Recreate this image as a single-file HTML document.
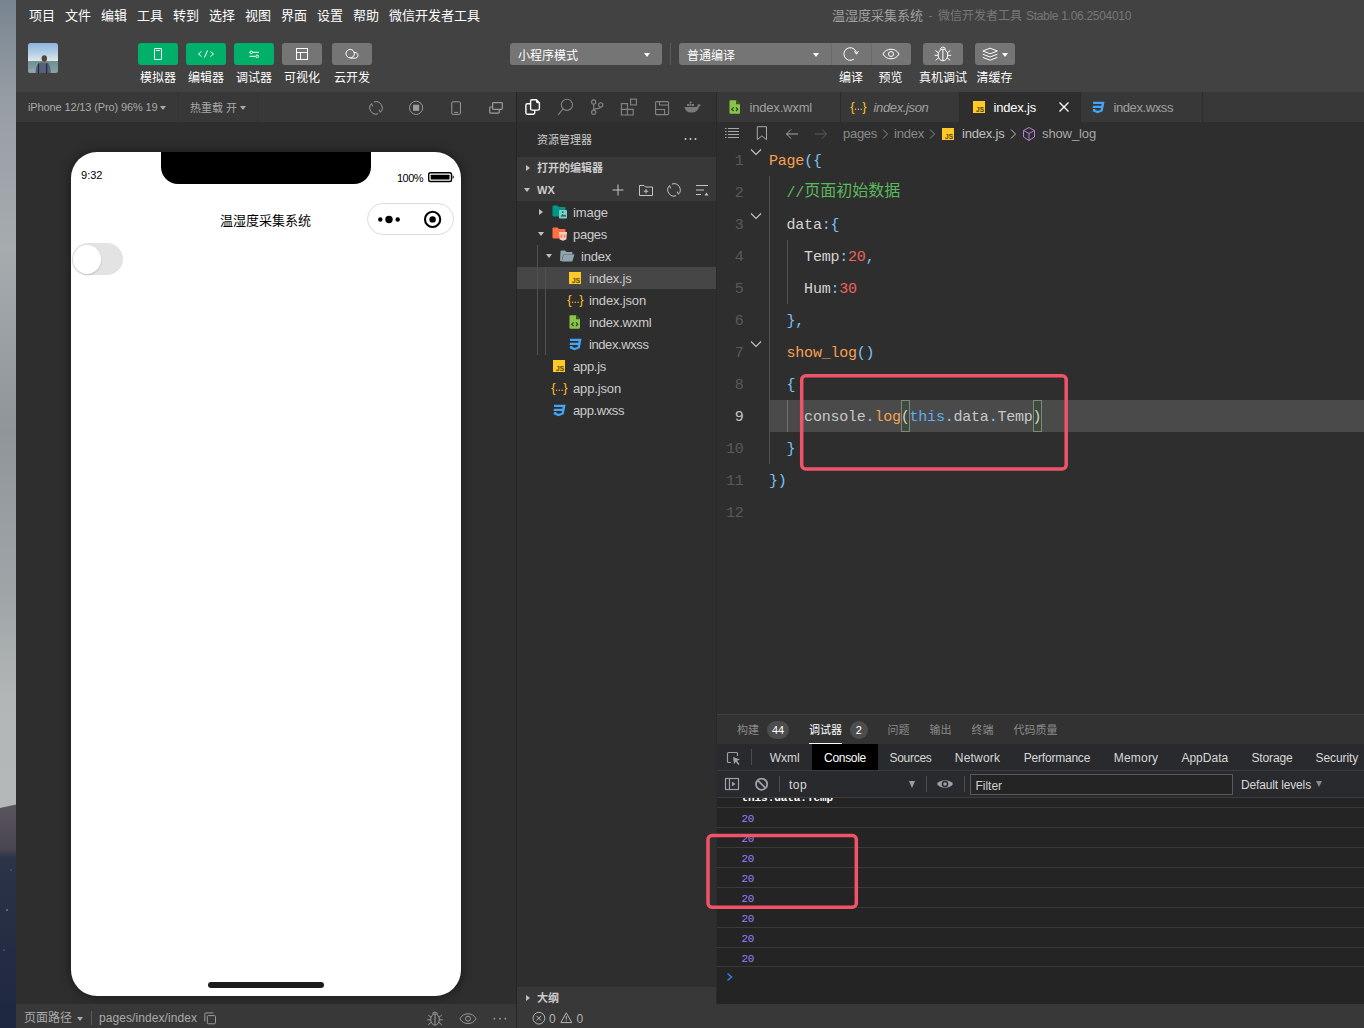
<!DOCTYPE html>
<html lang="zh-CN"><head><meta charset="utf-8"><title>微信开发者工具</title>
<style>
html,body{margin:0;padding:0;}
body{width:1364px;height:1028px;position:relative;overflow:hidden;background:#2e2e2e;font-family:'Liberation Sans','Noto Sans CJK SC',sans-serif;}
.r{position:absolute;display:block;}
.t{position:absolute;white-space:pre;}
</style></head><body>
<div class="r" style="left:0;top:0;width:16px;height:1028px;background:linear-gradient(180deg,#78848f 0px,#969ea5 100px,#a6abae 250px,#8f9599 430px,#a0a6a8 600px,#b2b6b6 700px,#b4b8b8 810px);"></div>
<svg class="r" style="left:0px;top:780px;" width="16" height="248" viewBox="0 0 16 248"><defs><linearGradient id="mt" x1="0" y1="0" x2="0" y2="1"><stop offset="0" stop-color="#5a555e"/><stop offset="0.20" stop-color="#4a4651"/><stop offset="0.24" stop-color="#2b3348"/><stop offset="1" stop-color="#1d2740"/></linearGradient></defs><polygon points="0,28 16,24.500 16,248 0,248" fill="url(#mt)"/><circle cx="7" cy="130" r="0.800" fill="#9fb0c8"/><circle cx="11" cy="90" r="0.600" fill="#8fa0b8"/><circle cx="4" cy="170" r="0.600" fill="#8fa0b8"/></svg>
<div class="r" style="left:16px;top:0px;width:1348px;height:92px;background:#424242;"></div>
<span class="t" id="t0" style="left:29px;top:5.50px;line-height:20px;font-size:13px;color:#ffffff;">项目</span>
<span class="t" id="t1" style="left:65px;top:5.50px;line-height:20px;font-size:13px;color:#ffffff;">文件</span>
<span class="t" id="t2" style="left:101px;top:5.50px;line-height:20px;font-size:13px;color:#ffffff;">编辑</span>
<span class="t" id="t3" style="left:137px;top:5.50px;line-height:20px;font-size:13px;color:#ffffff;">工具</span>
<span class="t" id="t4" style="left:173px;top:5.50px;line-height:20px;font-size:13px;color:#ffffff;">转到</span>
<span class="t" id="t5" style="left:209px;top:5.50px;line-height:20px;font-size:13px;color:#ffffff;">选择</span>
<span class="t" id="t6" style="left:245px;top:5.50px;line-height:20px;font-size:13px;color:#ffffff;">视图</span>
<span class="t" id="t7" style="left:281px;top:5.50px;line-height:20px;font-size:13px;color:#ffffff;">界面</span>
<span class="t" id="t8" style="left:317px;top:5.50px;line-height:20px;font-size:13px;color:#ffffff;">设置</span>
<span class="t" id="t9" style="left:353px;top:5.50px;line-height:20px;font-size:13px;color:#ffffff;">帮助</span>
<span class="t" id="t10" style="left:389px;top:5.50px;line-height:20px;font-size:13px;color:#ffffff;">微信开发者工具</span>
<span class="t" id="t11" style="left:832px;top:5.50px;line-height:20px;font-size:13px;color:#a0a0a0;">温湿度采集系统</span>
<span class="t" id="t12" style="left:928.5px;top:5.50px;line-height:20px;font-size:12px;color:#787878;">-</span>
<span class="t" id="t13" style="left:938px;top:5.50px;line-height:20px;font-size:12px;color:#787878;">微信开发者工具</span>
<span class="t" id="t14" style="left:1026px;top:5.50px;line-height:20px;font-size:12px;color:#787878;letter-spacing:-0.303px;">Stable 1.06.2504010</span>
<svg class="r" style="left:28px;top:43px;" width="30" height="30" viewBox="0 0 30 30"><defs><linearGradient id="sky" x1="0" y1="0" x2="0" y2="1"><stop offset="0" stop-color="#8fb4dc"/><stop offset="0.35" stop-color="#b4d0e6"/><stop offset="0.6" stop-color="#e4e8e2"/><stop offset="0.61" stop-color="#6f9295"/><stop offset="1" stop-color="#86a3a3"/></linearGradient><clipPath id="avc"><rect width="30" height="30" rx="2.5"/></clipPath></defs>
<g clip-path="url(#avc)"><rect width="30" height="30" fill="url(#sky)"/><path d="M0 30 L0 27 L6 25 L10 30Z" fill="#8fa2ad"/><path d="M7.500 30 C7.800 23 10 19.800 13 19.600 L19 19.600 C21.500 20 22.500 24 22.800 30Z" fill="#56607a"/><ellipse cx="16.300" cy="15.600" rx="2.700" ry="3.300" fill="#4d4844"/><path d="M14 17 q2 3.500 4.500 0.500 l0 2.200 h-4.500z" fill="#8a7a6c"/><path d="M10.500 20.500v9.500M18.700 20.500v9.500" stroke="#1f2540" stroke-width="1.100"/></g></svg>
<div class="r" style="left:138px;top:43px;width:40px;height:22px;background:#00b06a;border-radius:3px;"></div>
<span class="t" id="t15" style="left:8px;width:300px;text-align:center;top:69.50px;line-height:16px;font-size:12px;color:#ffffff;">模拟器</span>
<div class="r" style="left:186px;top:43px;width:40px;height:22px;background:#00b06a;border-radius:3px;"></div>
<span class="t" id="t16" style="left:56px;width:300px;text-align:center;top:69.50px;line-height:16px;font-size:12px;color:#ffffff;">编辑器</span>
<div class="r" style="left:234px;top:43px;width:40px;height:22px;background:#00b06a;border-radius:3px;"></div>
<span class="t" id="t17" style="left:104px;width:300px;text-align:center;top:69.50px;line-height:16px;font-size:12px;color:#ffffff;">调试器</span>
<div class="r" style="left:282px;top:43px;width:40px;height:22px;background:#757575;border-radius:3px;"></div>
<span class="t" id="t18" style="left:152px;width:300px;text-align:center;top:69.50px;line-height:16px;font-size:12px;color:#ffffff;">可视化</span>
<div class="r" style="left:332px;top:43px;width:40px;height:22px;background:#757575;border-radius:3px;"></div>
<span class="t" id="t19" style="left:202px;width:300px;text-align:center;top:69.50px;line-height:16px;font-size:12px;color:#ffffff;">云开发</span>
<svg class="r" style="left:138px;top:43px;" width="40" height="22" viewBox="0 0 40 22"><rect x="16.5" y="5.5" width="7" height="11" rx="0.5" stroke="#fff" fill="none" stroke-width="1"/><path d="M18 7.5h4" stroke="#fff" fill="none" stroke-width="1"/></svg>
<svg class="r" style="left:186px;top:43px;" width="40" height="22" viewBox="0 0 40 22"><path d="M15.5 8.5 L12.5 11 L15.5 13.5 M24.5 8.5 L27.5 11 L24.5 13.5 M21.5 7.5 L18.5 14.5" stroke="#fff" fill="none" stroke-width="1"/></svg>
<svg class="r" style="left:234px;top:43px;" width="40" height="22" viewBox="0 0 40 22"><path d="M15.500 9.300h0.500M18.500 9.300H25M15.500 13.300h6M24.500 13.300h0.500" stroke="#fff" fill="none" stroke-width="1"/><circle cx="17.200" cy="9.300" r="1.300" stroke="#fff" fill="none" stroke-width="1"/><circle cx="23.200" cy="13.300" r="1.300" stroke="#fff" fill="none" stroke-width="1"/></svg>
<svg class="r" style="left:282px;top:43px;" width="40" height="22" viewBox="0 0 40 22"><rect x="14.5" y="5.5" width="11" height="11" stroke="#fff" fill="none" stroke-width="1"/><path d="M14.5 9.5h11M18.5 9.5v7" stroke="#fff" fill="none" stroke-width="1"/></svg>
<svg class="r" style="left:332px;top:43px;" width="40" height="22" viewBox="0 0 40 22"><circle cx="18.200" cy="10.600" r="4.200" stroke="#fff" fill="none" stroke-width="1"/><path d="M21.800 9.900 a2.800 2.800 0 1 1 1.800 5.200 H18.200" stroke="#fff" fill="none" stroke-width="1"/></svg>
<div class="r" style="left:510px;top:43px;width:152px;height:22px;background:#757575;border-radius:3px;"></div>
<span class="t" id="t20" style="left:518px;top:47.50px;line-height:16px;font-size:12px;color:#ffffff;">小程序模式</span>
<div class="r" style="left:644px;top:53px;border:3px solid transparent;border-top:4px solid #fff;border-bottom:0;"></div>
<div class="r" style="left:670px;top:43px;width:1px;height:22px;background:#5a5a5a;"></div>
<div class="r" style="left:679px;top:43px;width:232px;height:22px;background:#757575;border-radius:3px;"></div>
<span class="t" id="t21" style="left:687px;top:47.50px;line-height:16px;font-size:12px;color:#ffffff;">普通编译</span>
<div class="r" style="left:813px;top:53px;border:3px solid transparent;border-top:4px solid #fff;border-bottom:0;"></div>
<div class="r" style="left:831px;top:43px;width:1px;height:22px;background:#696969;"></div>
<div class="r" style="left:871px;top:43px;width:1px;height:22px;background:#696969;"></div>
<div class="r" style="left:923px;top:43px;width:40px;height:22px;background:#757575;border-radius:3px;"></div>
<div class="r" style="left:975px;top:43px;width:40px;height:22px;background:#757575;border-radius:3px;"></div>
<svg class="r" style="left:831px;top:43px;" width="40" height="22" viewBox="0 0 40 22"><path d="M22.900 16.100 A6.300 6.300 0 1 1 25.500 10.900" stroke="#fff" fill="none" stroke-width="1"/><path d="M23.300 8.300 L25.600 11.200 L27.300 8.200" stroke="#fff" fill="none" stroke-width="1"/></svg>
<svg class="r" style="left:871px;top:43px;" width="40" height="22" viewBox="0 0 40 22"><path d="M12 11 C15 4.600 25 4.600 28 11 C25 17.400 15 17.400 12 11Z" stroke="#fff" fill="none" stroke-width="1"/><circle cx="20" cy="11" r="2.500" stroke="#fff" fill="none" stroke-width="1"/></svg>
<svg class="r" style="left:923px;top:43px;" width="40" height="22" viewBox="0 0 40 22"><ellipse cx="19.900" cy="12" rx="4.800" ry="5.800" stroke="#fff" fill="none" stroke-width="1"/><path d="M19.900 6.200v11.600 M17.400 6.600 a2.500 2.500 0 0 1 5 0 M15.400 9.800 l-3 -2.300 M24.400 9.800 l3 -2.300 M15.100 12.300 h-3.500 M24.700 12.300 h3.500 M15.600 14.800 l-3 2.500 M24.200 14.800 l3 2.500" stroke="#fff" fill="none" stroke-width="1"/></svg>
<svg class="r" style="left:975px;top:43px;" width="40" height="22" viewBox="0 0 40 22"><path d="M7.800 8 L15.100 5.200 L22.400 8 L15.100 10.800Z M7.800 11.200 L15.100 14 L22.400 11.200 M7.800 14.400 L15.100 17.200 L22.400 14.400" stroke="#fff" fill="none" stroke-width="1"/></svg>
<div class="r" style="left:1002px;top:53px;border:3px solid transparent;border-top:4px solid #fff;border-bottom:0;"></div>
<span class="t" id="t22" style="left:701px;width:300px;text-align:center;top:69.50px;line-height:16px;font-size:12px;color:#ffffff;">编译</span>
<span class="t" id="t23" style="left:740.5px;width:300px;text-align:center;top:69.50px;line-height:16px;font-size:12px;color:#ffffff;">预览</span>
<span class="t" id="t24" style="left:793px;width:300px;text-align:center;top:69.50px;line-height:16px;font-size:12px;color:#ffffff;">真机调试</span>
<span class="t" id="t25" style="left:844.5px;width:300px;text-align:center;top:69.50px;line-height:16px;font-size:12px;color:#ffffff;">清缓存</span>
<div class="r" style="left:16px;top:92px;width:500px;height:30px;background:#383838;"></div>
<span class="t" id="t26" style="left:28px;top:99.00px;line-height:16px;font-size:11px;color:#aaaaaa;letter-spacing:-0.128px;">iPhone 12/13 (Pro) 96% 19</span>
<div class="r" style="left:160px;top:106px;border:3px solid transparent;border-top:4px solid #aaa;border-bottom:0;"></div>
<div class="r" style="left:178px;top:92px;width:1px;height:30px;background:#333333;"></div>
<span class="t" id="t27" style="left:190px;top:99.50px;line-height:16px;font-size:11px;color:#aaaaaa;letter-spacing:-0.013px;">热重载 开</span>
<div class="r" style="left:240px;top:106px;border:3px solid transparent;border-top:4px solid #aaa;border-bottom:0;"></div>
<div class="r" style="left:257px;top:92px;width:1px;height:30px;background:#333333;"></div>
<svg class="r" style="left:368px;top:99px;" width="16" height="17" viewBox="0 0 16 17"><path d="M5.900 3.100 A6.200 6.200 0 0 1 12.400 13.300 L11.200 10.600 M10.100 14.700 A6.200 6.200 0 0 1 3.600 4.500 L4.700 7.500" stroke="#9a9a9a" fill="none" stroke-width="1"/></svg>
<svg class="r" style="left:408px;top:99px;" width="17" height="17" viewBox="0 0 17 17"><circle cx="8.100" cy="8.800" r="6.600" stroke="#9a9a9a" fill="none" stroke-width="1"/><rect x="5" y="5.700" width="6.200" height="6.200" fill="#9a9a9a"/></svg>
<svg class="r" style="left:448px;top:99px;" width="16" height="17" viewBox="0 0 16 17"><rect x="3.800" y="2.800" width="8.600" height="12.600" rx="1.200" stroke="#9a9a9a" fill="none" stroke-width="1"/><path d="M6.200 13.400h3.800" stroke="#9a9a9a" fill="none" stroke-width="1"/></svg>
<svg class="r" style="left:488px;top:99px;" width="18" height="17" viewBox="0 0 18 17"><rect x="4.600" y="3.600" width="9.700" height="6.700" rx="0.800" stroke="#9a9a9a" fill="none" stroke-width="1.200"/><path d="M4.600 8 H2.500 a0.800 0.800 0 0 0 -0.800 0.800 v4.500 a0.800 0.800 0 0 0 0.800 0.800 h8 a0.800 0.800 0 0 0 0.800 -0.800 V10.300" stroke="#9a9a9a" fill="none" stroke-width="1.200"/></svg>
<div class="r" style="left:16px;top:122px;width:500px;height:882px;background:#2e2e2e;"></div>
<div class="r" style="left:71px;top:152px;width:390px;height:844px;background:#fff;border-radius:26px;box-shadow:0 0 10px 2px rgba(0,0,0,0.35);overflow:hidden;"></div>
<div class="r" style="left:161px;top:152px;width:210px;height:32px;background:#000;border-radius:0 0 17px 17px;"></div>
<span class="t" id="t28" style="left:81px;top:168.00px;line-height:14px;font-size:11px;color:#000000;letter-spacing:0.020px;">9:32</span>
<span class="t" id="t29" style="left:397px;top:171.00px;line-height:14px;font-size:11px;color:#000000;letter-spacing:-0.535px;">100%</span>
<svg class="r" style="left:427px;top:171px;" width="28" height="12" viewBox="0 0 28 12"><rect x="1.700" y="1.700" width="22.800" height="8.800" rx="1.800" fill="none" stroke="#000" stroke-width="1.400"/><rect x="3.700" y="3.700" width="18.800" height="4.800" rx="0.600" fill="#000"/><path d="M25.700 4.300 a2 2 0 0 1 0 3.600z" fill="#000"/></svg>
<span class="t" id="t30" style="left:220px;top:212.00px;line-height:18px;font-size:13px;color:#000000;">温湿度采集系统</span>
<div class="r" style="left:367px;top:203px;width:85px;height:30px;border:1px solid #dcdcdc;border-radius:16px;background:#fff;"></div>
<svg class="r" style="left:367px;top:203px;" width="87" height="32" viewBox="0 0 87 32"><circle cx="13.3" cy="16.5" r="2.2" fill="#000"/><circle cx="22" cy="16.5" r="3.7" fill="#000"/><circle cx="30.7" cy="16.5" r="2.2" fill="#000"/><circle cx="65.6" cy="16.4" r="7.6" fill="none" stroke="#000" stroke-width="2.1"/><circle cx="65.6" cy="16.4" r="3.2" fill="#000"/></svg>
<div class="r" style="left:72px;top:243px;width:51px;height:32px;border-radius:16px;background:#e3e3e3;"></div>
<div class="r" style="left:72.800px;top:244.500px;width:28.600px;height:29px;border-radius:50%;background:#fff;box-shadow:0 1px 2px rgba(0,0,0,0.18);"></div>
<div class="r" style="left:208px;top:982px;width:116px;height:5.6px;background:#1c1c1c;border-radius:3px;"></div>
<div class="r" style="left:16px;top:1004px;width:1348px;height:24px;background:#383838;"></div>
<span class="t" id="t31" style="left:24px;top:1010.00px;line-height:16px;font-size:12px;color:#aaaaaa;">页面路径</span>
<div class="r" style="left:77px;top:1017px;border:3px solid transparent;border-top:4px solid #aaa;border-bottom:0;"></div>
<div class="r" style="left:91px;top:1011px;width:1px;height:14px;background:#5a5a5a;"></div>
<span class="t" id="t32" style="left:99px;top:1010.00px;line-height:16px;font-size:12px;color:#aaaaaa;letter-spacing:0.074px;">pages/index/index</span>
<svg class="r" style="left:203px;top:1011px;" width="16" height="16" viewBox="0 0 16 16"><rect x="4.300" y="4.600" width="8.200" height="8.200" rx="1" stroke="#9a9a9a" fill="none" stroke-width="1"/><path d="M1.800 10.400 V2.900 a1 1 0 0 1 1 -1 H10.300" stroke="#9a9a9a" fill="none" stroke-width="1"/></svg>
<svg class="r" style="left:425px;top:1009px;" width="20" height="19" viewBox="0 0 20 19"><ellipse cx="10" cy="10.500" rx="4.300" ry="5.600" stroke="#9a9a9a" fill="none" stroke-width="1"/><path d="M10 5v11 M7.700 5.300 a2.300 2.300 0 0 1 4.600 0 M6 8.300 l-2.800 -2.200 M14 8.300 l2.800 -2.200 M5.700 10.800 h-3.500 M14.300 10.800 h3.500 M6.200 13.300 l-3 2.500 M13.800 13.300 l3 2.500" stroke="#9a9a9a" fill="none" stroke-width="1"/></svg>
<svg class="r" style="left:458px;top:1010px;" width="20" height="18" viewBox="0 0 20 18"><path d="M2 8.700 C5 2.200 15 2.200 18 8.700 C15 15.200 5 15.200 2 8.700Z" stroke="#9a9a9a" fill="none" stroke-width="1"/><circle cx="10" cy="8.700" r="2.500" stroke="#9a9a9a" fill="none" stroke-width="1"/></svg>
<svg class="r" style="left:492px;top:1014px;" width="16" height="10" viewBox="0 0 16 10"><circle cx="2.400" cy="4.700" r="0.900" fill="#a0a0a0"/><circle cx="8" cy="4.700" r="0.900" fill="#a0a0a0"/><circle cx="13.400" cy="4.700" r="0.900" fill="#a0a0a0"/></svg>
<div class="r" style="left:516px;top:92px;width:1px;height:936px;background:#252525;"></div>
<div class="r" style="left:517px;top:92px;width:199px;height:30px;background:#333333;"></div>
<svg class="r" style="left:523px;top:97px;" width="20" height="20" viewBox="0 0 20 20"><path d="M9 2.700 h4.400 l3 3 v6 a1.400 1.400 0 0 1 -1.400 1.400 h-6 a1.400 1.400 0 0 1 -1.400 -1.400 v-7.600 a1.400 1.400 0 0 1 1.400 -1.400z M13.600 3 v1.500 a1 1 0 0 0 1 1 h1.500" stroke="#fff" fill="none" stroke-width="1.400"/><path d="M7.600 6.800 h-3.300 a1.400 1.400 0 0 0 -1.400 1.400 v7.600 a1.400 1.400 0 0 0 1.400 1.400 h6 a1.400 1.400 0 0 0 1.400 -1.400 v-2.700" stroke="#fff" fill="none" stroke-width="1.400"/></svg>
<svg class="r" style="left:556px;top:97px;" width="20" height="20" viewBox="0 0 20 20"><circle cx="10.900" cy="7.800" r="5.600" stroke="#858585" fill="none" stroke-width="1.1"/><path d="M7 12 L2.200 17.800" stroke="#858585" fill="none" stroke-width="1.1"/></svg>
<svg class="r" style="left:588px;top:97px;" width="20" height="20" viewBox="0 0 20 20"><circle cx="5.700" cy="5" r="2.100" stroke="#858585" fill="none" stroke-width="1.1"/><circle cx="5.700" cy="15.200" r="2.100" stroke="#858585" fill="none" stroke-width="1.1"/><circle cx="12.700" cy="7.900" r="2.100" stroke="#858585" fill="none" stroke-width="1.1"/><path d="M5.700 7.100 v6 M12.700 10 c0 2.500 -7 0.800 -7 3.100" stroke="#858585" fill="none" stroke-width="1.1"/></svg>
<svg class="r" style="left:619px;top:97px;" width="20" height="20" viewBox="0 0 20 20"><path d="M2.400 6.600 h6 v5.800 h-6z M8.400 12.400 v5.600 h-6 v-5.600 M8.400 12.400 h5.800 v5.600 h-5.800" stroke="#858585" fill="none" stroke-width="1.1"/><rect x="11.600" y="2.100" width="5.800" height="5.800" stroke="#858585" fill="none" stroke-width="1.1"/></svg>
<svg class="r" style="left:653px;top:99px;" width="18" height="18" viewBox="0 0 18 18"><rect x="2.600" y="2.600" width="13" height="13" rx="1.200" stroke="#858585" fill="none" stroke-width="1.1"/><path d="M6.500 2.600 v3.400 h9.100 M2.600 10.500 h9 v5" stroke="#858585" fill="none" stroke-width="1.1"/></svg>
<svg class="r" style="left:683px;top:99px;" width="20" height="16" viewBox="0 0 20 16"><path d="M1.5 8 h12 c0.800 -0.300 1.300 -1.200 1.200 -2.200 c1 -0.800 2.500 -0.500 3.300 0.200 c-0.700 0.300 -1.500 1 -2 2 c-0.800 3.500 -3.500 5.500 -7.500 5.500 c-4 0 -6.500 -2 -7 -5.500z" fill="#7a7a7a"/><path d="M4 5h2v2H4zM6.500 5h2v2h-2zM9 5h2v2H9zM6.500 2.600h2v2h-2z" fill="#7a7a7a"/></svg>
<div class="r" style="left:517px;top:122px;width:199px;height:882px;background:#2e2e2e;"></div>
<span class="t" id="t33" style="left:537px;top:132.40px;line-height:16px;font-size:11px;color:#cccccc;">资源管理器</span>
<svg class="r" style="left:683px;top:135px;" width="16" height="8" viewBox="0 0 16 8"><circle cx="2.500" cy="4" r="1" fill="#ccc"/><circle cx="7.500" cy="4" r="1" fill="#ccc"/><circle cx="12.500" cy="4" r="1" fill="#ccc"/></svg>
<div class="r" style="left:517px;top:157px;width:199px;height:44px;background:#383838;"></div>
<div class="r" style="left:526px;top:164.500px;border:3.500px solid transparent;border-left:4.500px solid #c0c0c0;border-right:0;"></div>
<span class="t" id="t34" style="left:537px;top:160.00px;line-height:16px;font-size:11px;color:#cccccc;font-weight:bold;">打开的编辑器</span>
<div class="r" style="left:524px;top:188px;border:3.500px solid transparent;border-top:4.500px solid #c0c0c0;border-bottom:0;"></div>
<span class="t" id="t35" style="left:537px;top:182.00px;line-height:16px;font-size:11px;color:#cccccc;font-weight:bold;letter-spacing:0.133px;">WX</span>
<svg class="r" style="left:610px;top:182px;" width="16" height="16" viewBox="0 0 16 16"><path d="M8 2.500v11M2.500 8h11" stroke="#c5c5c5" fill="none" stroke-width="1"/></svg>
<svg class="r" style="left:638px;top:182px;" width="16" height="16" viewBox="0 0 16 16"><path d="M1.500 3.500 h4.500 l1.500 1.500 h7 v8.500 h-13z M8 7v4.500 M5.800 9.200h4.500" stroke="#c5c5c5" fill="none" stroke-width="1"/></svg>
<svg class="r" style="left:666px;top:181px;" width="16" height="17" viewBox="0 0 16 17"><path d="M5.900 3.100 A6.200 6.200 0 0 1 12.400 13.300 L11.200 10.600 M10.100 14.700 A6.200 6.200 0 0 1 3.600 4.500 L4.700 7.500" stroke="#c5c5c5" fill="none" stroke-width="1"/></svg>
<svg class="r" style="left:694px;top:182px;" width="16" height="16" viewBox="0 0 16 16"><path d="M2 3.500h12M2 8h8M2 12.500h5" stroke="#c5c5c5" fill="none" stroke-width="1"/><path d="M10.500 13.500 l2 -3 l2 3z" fill="#c5c5c5"/></svg>
<div class="r" style="left:517px;top:267px;width:199px;height:22px;background:#464646;"></div>
<div class="r" style="left:537px;top:245px;width:1px;height:110px;background:#505050;"></div>
<div class="r" style="left:545px;top:267px;width:1px;height:88px;background:#505050;"></div>
<div class="r" style="left:538.5px;top:208.5px;border:3.500px solid transparent;border-left:4.500px solid #c0c0c0;border-right:0;"></div>
<svg class="r" style="left:551.7px;top:205px;" width="16" height="14" viewBox="0 0 16 14"><path d="M0.500 1.500 a1 1 0 0 1 1 -1 h4 l1.500 1.500 h5.500 a1 1 0 0 1 1 1 v7.500 a1 1 0 0 1 -1 1 h-11 a1 1 0 0 1 -1 -1z" fill="#009688"/><rect x="7" y="5" width="8" height="8.500" rx="1" fill="#80cbc4"/><path d="M8.500 11.500 l2 -2.500 l1.500 1.500 l1 -1 l1.500 2z M10 7 a0.800 0.800 0 1 1 0 0.100" fill="#00695c"/></svg>
<span class="t" id="t36" style="left:573px;top:203.50px;line-height:18px;font-size:13px;color:#cccccc;letter-spacing:-0.084px;">image</span>
<div class="r" style="left:537.5px;top:232px;border:3.500px solid transparent;border-top:4.500px solid #c0c0c0;border-bottom:0;"></div>
<svg class="r" style="left:551.7px;top:227px;" width="16" height="14" viewBox="0 0 16 14"><path d="M0.500 1.500 a1 1 0 0 1 1 -1 h4 l1.500 1.500 h5.500 a1 1 0 0 1 1 1 v7.500 a1 1 0 0 1 -1 1 h-11 a1 1 0 0 1 -1 -1z" fill="#ff7043"/><path d="M7 5 h8 l-0.700 7.500 l-3.300 1.200 l-3.300 -1.200z" fill="#ffccbc"/><path d="M10 7.500 L8.800 9 L10 10.500 M12 7.500 L13.200 9 L12 10.500" stroke="#e64a19" stroke-width="0.900" fill="none"/></svg>
<span class="t" id="t37" style="left:573px;top:225.50px;line-height:18px;font-size:13px;color:#cccccc;letter-spacing:-0.284px;">pages</span>
<div class="r" style="left:546px;top:254px;border:3.500px solid transparent;border-top:4.500px solid #c0c0c0;border-bottom:0;"></div>
<svg class="r" style="left:560px;top:250px;" width="15" height="12" viewBox="0 0 15 12"><path d="M0.500 1.500 a1 1 0 0 1 1 -1 h3.500 l1.500 1.500 h5 a1 1 0 0 1 1 1 v1.500 h-9 l-2 6.500 h-1.500z" fill="#90a4ae"/><path d="M3.800 4.500 h10.700 l-2.200 7 h-10.800z" fill="#90a4ae"/></svg>
<span class="t" id="t38" style="left:581px;top:247.50px;line-height:18px;font-size:13px;color:#cccccc;letter-spacing:-0.216px;">index</span>
<svg class="r" style="left:569px;top:272px;" width="12" height="12" viewBox="0 0 12 12"><rect width="12" height="12" fill="#ffca28"/><text x="11" y="10.800" font-size="6.500" font-weight="bold" text-anchor="end" fill="#4a3c00" font-family="Liberation Sans,sans-serif">JS</text></svg>
<span class="t" id="t39" style="left:589px;top:269.50px;line-height:18px;font-size:13px;color:#cccccc;letter-spacing:-0.197px;">index.js</span>
<svg class="r" style="left:566.7px;top:293px;" width="17" height="14" viewBox="0 0 17 14"><text x="0.300" y="11" font-size="13" fill="#fbc02d" font-family="Liberation Sans,sans-serif">{</text><text x="12.300" y="11" font-size="13" fill="#fbc02d" font-family="Liberation Sans,sans-serif">}</text><circle cx="5.600" cy="9.200" r="0.700" fill="#fbc02d"/><circle cx="8.400" cy="9.200" r="0.700" fill="#fbc02d"/><circle cx="11.200" cy="9.200" r="0.700" fill="#fbc02d"/></svg>
<span class="t" id="t40" style="left:589px;top:291.50px;line-height:18px;font-size:13px;color:#cccccc;letter-spacing:-0.155px;">index.json</span>
<svg class="r" style="left:568.7px;top:315px;" width="12" height="14" viewBox="0 0 12 14"><path d="M1.500 0.300 h5.500 l4 4 v8.500 a1 1 0 0 1 -1 1 h-8.500 a1 1 0 0 1 -1 -1 v-11.500 a1 1 0 0 1 1 -1z" fill="#8bc34a"/><path d="M7 0.300 v4 h4z" fill="#2e5a14"/><path d="M4.600 7.300 L2.800 9.200 L4.600 11.100 M6.900 7.300 L8.700 9.200 L6.900 11.100" stroke="#24440c" stroke-width="1.200" fill="none"/></svg>
<span class="t" id="t41" style="left:589px;top:313.50px;line-height:18px;font-size:13px;color:#cccccc;letter-spacing:-0.180px;">index.wxml</span>
<svg class="r" style="left:568.2px;top:337.5px;" width="14" height="13" viewBox="0 0 14 13"><path transform="translate(-0.700,0) scale(1.140,1)" d="M2.200 0.800 h10.300 l-1.600 9.400 l-4.600 2 l-4.300 -2 l0.400 -2.300 h2.200 l-0.200 1 l2.200 0.900 l2.400 -0.900 l0.300 -2 h-7.300 l0.400 -2.200 h7.200 l0.300 -1.700 h-7.300z" fill="#42a5f5"/></svg>
<span class="t" id="t42" style="left:589px;top:335.50px;line-height:18px;font-size:13px;color:#cccccc;letter-spacing:-0.408px;">index.wxss</span>
<svg class="r" style="left:553px;top:360px;" width="12" height="12" viewBox="0 0 12 12"><rect width="12" height="12" fill="#ffca28"/><text x="11" y="10.800" font-size="6.500" font-weight="bold" text-anchor="end" fill="#4a3c00" font-family="Liberation Sans,sans-serif">JS</text></svg>
<span class="t" id="t43" style="left:573px;top:357.50px;line-height:18px;font-size:13px;color:#cccccc;letter-spacing:-0.284px;">app.js</span>
<svg class="r" style="left:550.7px;top:381px;" width="17" height="14" viewBox="0 0 17 14"><text x="0.300" y="11" font-size="13" fill="#fbc02d" font-family="Liberation Sans,sans-serif">{</text><text x="12.300" y="11" font-size="13" fill="#fbc02d" font-family="Liberation Sans,sans-serif">}</text><circle cx="5.600" cy="9.200" r="0.700" fill="#fbc02d"/><circle cx="8.400" cy="9.200" r="0.700" fill="#fbc02d"/><circle cx="11.200" cy="9.200" r="0.700" fill="#fbc02d"/></svg>
<span class="t" id="t44" style="left:573px;top:379.50px;line-height:18px;font-size:13px;color:#cccccc;letter-spacing:-0.145px;">app.json</span>
<svg class="r" style="left:552.2px;top:403.5px;" width="14" height="13" viewBox="0 0 14 13"><path transform="translate(-0.700,0) scale(1.140,1)" d="M2.200 0.800 h10.300 l-1.600 9.400 l-4.600 2 l-4.300 -2 l0.400 -2.300 h2.200 l-0.200 1 l2.200 0.900 l2.400 -0.900 l0.300 -2 h-7.300 l0.400 -2.200 h7.200 l0.300 -1.700 h-7.300z" fill="#42a5f5"/></svg>
<span class="t" id="t45" style="left:573px;top:401.50px;line-height:18px;font-size:13px;color:#cccccc;letter-spacing:-0.400px;">app.wxss</span>
<div class="r" style="left:517px;top:987px;width:199px;height:17px;background:#383838;"></div>
<div class="r" style="left:526px;top:994.500px;border:3.500px solid transparent;border-left:4.500px solid #c0c0c0;border-right:0;"></div>
<span class="t" id="t46" style="left:537px;top:990.30px;line-height:16px;font-size:11px;color:#cccccc;font-weight:bold;">大纲</span>
<svg class="r" style="left:531px;top:1010px;" width="16" height="16" viewBox="0 0 16 16"><circle cx="7.900" cy="8.200" r="5.900" stroke="#b4b4b4" fill="none" stroke-width="1"/><path d="M5.600 5.900l4.600 4.600M10.200 5.900l-4.600 4.600" stroke="#b4b4b4" fill="none" stroke-width="1"/></svg>
<span class="t" id="t47" style="left:549px;top:1010.50px;line-height:16px;font-size:12px;color:#b4b4b4;">0</span>
<svg class="r" style="left:559px;top:1010px;" width="16" height="16" viewBox="0 0 16 16"><path d="M7.300 2.800 L12.800 12.600 H1.800Z M7.300 6v3.600 M7.300 10.500v1" stroke="#b4b4b4" fill="none" stroke-width="1"/></svg>
<span class="t" id="t48" style="left:576.5px;top:1010.50px;line-height:16px;font-size:12px;color:#b4b4b4;">0</span>
<div class="r" style="left:716px;top:92px;width:1px;height:912px;background:#2a2a2a;"></div>
<div class="r" style="left:717px;top:92px;width:647px;height:30px;background:#383838;"></div>
<div class="r" style="left:717px;top:92px;width:124px;height:30px;background:#383838;"></div>
<div class="r" style="left:841px;top:92px;width:119px;height:30px;background:#383838;"></div>
<div class="r" style="left:960px;top:92px;width:121px;height:30px;background:#2e2e2e;"></div>
<div class="r" style="left:1081px;top:92px;width:122px;height:30px;background:#383838;"></div>
<div class="r" style="left:840px;top:92px;width:1px;height:30px;background:#2b2b2b;"></div>
<div class="r" style="left:959px;top:92px;width:1px;height:30px;background:#2b2b2b;"></div>
<div class="r" style="left:1080px;top:92px;width:1px;height:30px;background:#2b2b2b;"></div>
<div class="r" style="left:1202px;top:92px;width:1px;height:30px;background:#2b2b2b;"></div>
<svg class="r" style="left:729.2px;top:100px;" width="12" height="14" viewBox="0 0 12 14"><path d="M1.500 0.300 h5.500 l4 4 v8.500 a1 1 0 0 1 -1 1 h-8.500 a1 1 0 0 1 -1 -1 v-11.500 a1 1 0 0 1 1 -1z" fill="#8bc34a"/><path d="M7 0.300 v4 h4z" fill="#2e5a14"/><path d="M4.600 7.300 L2.800 9.200 L4.600 11.100 M6.900 7.300 L8.700 9.200 L6.900 11.100" stroke="#24440c" stroke-width="1.200" fill="none"/></svg>
<span class="t" id="t49" style="left:749.5px;top:98.70px;line-height:18px;font-size:13px;color:#a0a0a0;letter-spacing:-0.180px;">index.wxml</span>
<svg class="r" style="left:849.7px;top:100px;" width="17" height="14" viewBox="0 0 17 14"><text x="0.300" y="11" font-size="13" fill="#fbc02d" font-family="Liberation Sans,sans-serif">{</text><text x="12.300" y="11" font-size="13" fill="#fbc02d" font-family="Liberation Sans,sans-serif">}</text><circle cx="5.600" cy="9.200" r="0.700" fill="#fbc02d"/><circle cx="8.400" cy="9.200" r="0.700" fill="#fbc02d"/><circle cx="11.200" cy="9.200" r="0.700" fill="#fbc02d"/></svg>
<span class="t" id="t50" style="left:873.5px;top:98.70px;line-height:18px;font-size:13px;color:#a0a0a0;font-style:italic;letter-spacing:-0.355px;">index.json</span>
<svg class="r" style="left:973px;top:101px;" width="12" height="12" viewBox="0 0 12 12"><rect width="12" height="12" fill="#ffca28"/><text x="11" y="10.800" font-size="6.500" font-weight="bold" text-anchor="end" fill="#4a3c00" font-family="Liberation Sans,sans-serif">JS</text></svg>
<span class="t" id="t51" style="left:993.5px;top:98.70px;line-height:18px;font-size:13px;color:#ffffff;letter-spacing:-0.197px;">index.js</span>
<svg class="r" style="left:1058px;top:101px;" width="12" height="12" viewBox="0 0 12 12"><path d="M1.500 1.500 L10.500 10.500 M10.500 1.500 L1.500 10.500" stroke="#fff" stroke-width="1.300" fill="none"/></svg>
<svg class="r" style="left:1091.2px;top:100.5px;" width="14" height="13" viewBox="0 0 14 13"><path transform="translate(-0.700,0) scale(1.140,1)" d="M2.200 0.800 h10.300 l-1.600 9.400 l-4.600 2 l-4.300 -2 l0.400 -2.300 h2.200 l-0.200 1 l2.200 0.900 l2.400 -0.900 l0.300 -2 h-7.300 l0.400 -2.200 h7.200 l0.300 -1.700 h-7.300z" fill="#42a5f5"/></svg>
<span class="t" id="t52" style="left:1113.5px;top:98.70px;line-height:18px;font-size:13px;color:#a0a0a0;letter-spacing:-0.408px;">index.wxss</span>
<div class="r" style="left:717px;top:122px;width:647px;height:22px;background:#2e2e2e;"></div>
<svg class="r" style="left:723.7px;top:125px;" width="16" height="16" viewBox="0 0 16 16"><path d="M1 3.500h1.500M4 3.500h11M1 6.500h1.500M4 6.500h11M1 9.500h1.500M4 9.500h11M1 12.500h1.500M4 12.500h11" stroke="#a8a8a8" fill="none" stroke-width="1"/></svg>
<svg class="r" style="left:755px;top:125px;" width="14" height="17" viewBox="0 0 14 17"><path d="M2.300 1.700 h9.200 v13 l-4.600 -3.800 l-4.600 3.800z" stroke="#a8a8a8" fill="none" stroke-width="1"/></svg>
<svg class="r" style="left:784px;top:126px;" width="16" height="16" viewBox="0 0 16 16"><path d="M14 8 H2.500 M7 3.500 L2.500 8 L7 12.500" stroke="#a8a8a8" fill="none" stroke-width="1"/></svg>
<svg class="r" style="left:813px;top:126px;" width="16" height="16" viewBox="0 0 16 16"><path d="M2 8 H13.500 M9 3.500 L13.500 8 L9 12.500" stroke="#5a5a5a" fill="none" stroke-width="1"/></svg>
<span class="t" id="t53" style="left:843px;top:124.50px;line-height:18px;font-size:13px;color:#8a8a8a;letter-spacing:-0.284px;">pages</span>
<svg class="r" style="left:881px;top:128px;" width="8" height="12" viewBox="0 0 8 12"><path d="M2 1.500 L6.500 6 L2 10.500" stroke="#8a8a8a" fill="none" stroke-width="1"/></svg>
<span class="t" id="t54" style="left:894px;top:124.50px;line-height:18px;font-size:13px;color:#8a8a8a;letter-spacing:-0.216px;">index</span>
<svg class="r" style="left:928px;top:128px;" width="8" height="12" viewBox="0 0 8 12"><path d="M2 1.500 L6.500 6 L2 10.500" stroke="#8a8a8a" fill="none" stroke-width="1"/></svg>
<svg class="r" style="left:942px;top:128px;" width="12" height="12" viewBox="0 0 12 12"><rect width="12" height="12" fill="#ffca28"/><text x="11" y="10.800" font-size="6.500" font-weight="bold" text-anchor="end" fill="#4a3c00" font-family="Liberation Sans,sans-serif">JS</text></svg>
<span class="t" id="t55" style="left:962px;top:124.50px;line-height:18px;font-size:13px;color:#c0c0c0;letter-spacing:-0.197px;">index.js</span>
<svg class="r" style="left:1009px;top:128px;" width="8" height="12" viewBox="0 0 8 12"><path d="M2 1.500 L6.500 6 L2 10.500" stroke="#c0c0c0" fill="none" stroke-width="1"/></svg>
<svg class="r" style="left:1021px;top:126px;" width="16" height="16" viewBox="0 0 16 16"><path d="M8 1.500 L13.500 4.500 V11 L8 14.500 L2.500 11 V4.500Z M2.500 4.500 L8 7.500 L13.500 4.500 M8 7.500 V14.500" stroke="#b180d7" fill="none" stroke-width="1"/></svg>
<span class="t" id="t56" style="left:1042px;top:124.50px;line-height:18px;font-size:13px;color:#a8a8a8;letter-spacing:-0.117px;">show_log</span>
<div class="r" style="left:717px;top:144px;width:647px;height:570px;background:#2e2e2e;"></div>
<div class="r" style="left:769px;top:400px;width:595px;height:32px;background:#4a4a4a;"></div>
<div class="r" style="left:769px;top:176px;width:1px;height:288px;background:#505050;"></div>
<div class="r" style="left:787px;top:240px;width:1px;height:64px;background:#505050;"></div>
<div class="r" style="left:787px;top:400px;width:1px;height:32px;background:#707070;"></div>
<div class="r" style="left:901px;top:400px;width:7px;height:30px;border:1px solid #7b8a7b;background:#3d4a3d;"></div>
<div class="r" style="left:1032.700px;top:400px;width:7px;height:30px;border:1px solid #7b8a7b;background:#3d4a3d;"></div>
<span class="t" style="right:620.5px;top:145.5px;line-height:32px;font-size:15px;font-family:'Liberation Mono','Noto Sans CJK SC',monospace;letter-spacing:-0.220px;color:#5a5a5a;">1</span>
<span class="t" style="left:769.00px;top:145.5px;line-height:32px;font-size:15px;font-family:'Liberation Mono','Noto Sans CJK SC',monospace;letter-spacing:-0.220px;"><span style="color:#f9a050">Page</span><span style="color:#7cc4f5">({</span></span>
<span class="t" style="right:620.5px;top:177.5px;line-height:32px;font-size:15px;font-family:'Liberation Mono','Noto Sans CJK SC',monospace;letter-spacing:-0.220px;color:#5a5a5a;">2</span>
<span class="t" style="left:786.56px;top:177.5px;line-height:32px;font-size:15px;font-family:'Liberation Mono','Noto Sans CJK SC',monospace;letter-spacing:-0.220px;"><span style="color:#5cb85c">//<span style="font-size:16px;line-height:16px;letter-spacing:0;position:relative;top:-1px">页面初始数据</span></span></span>
<span class="t" style="right:620.5px;top:209.5px;line-height:32px;font-size:15px;font-family:'Liberation Mono','Noto Sans CJK SC',monospace;letter-spacing:-0.220px;color:#5a5a5a;">3</span>
<span class="t" style="left:786.56px;top:209.5px;line-height:32px;font-size:15px;font-family:'Liberation Mono','Noto Sans CJK SC',monospace;letter-spacing:-0.220px;"><span style="color:#d4d4d4">data</span><span style="color:#7cc4f5">:{</span></span>
<span class="t" style="right:620.5px;top:241.5px;line-height:32px;font-size:15px;font-family:'Liberation Mono','Noto Sans CJK SC',monospace;letter-spacing:-0.220px;color:#5a5a5a;">4</span>
<span class="t" style="left:804.12px;top:241.5px;line-height:32px;font-size:15px;font-family:'Liberation Mono','Noto Sans CJK SC',monospace;letter-spacing:-0.220px;"><span style="color:#d4d4d4">Temp</span><span style="color:#7cc4f5">:</span><span style="color:#f0645a">20</span><span style="color:#7cc4f5">,</span></span>
<span class="t" style="right:620.5px;top:273.5px;line-height:32px;font-size:15px;font-family:'Liberation Mono','Noto Sans CJK SC',monospace;letter-spacing:-0.220px;color:#5a5a5a;">5</span>
<span class="t" style="left:804.12px;top:273.5px;line-height:32px;font-size:15px;font-family:'Liberation Mono','Noto Sans CJK SC',monospace;letter-spacing:-0.220px;"><span style="color:#d4d4d4">Hum</span><span style="color:#7cc4f5">:</span><span style="color:#f0645a">30</span></span>
<span class="t" style="right:620.5px;top:305.5px;line-height:32px;font-size:15px;font-family:'Liberation Mono','Noto Sans CJK SC',monospace;letter-spacing:-0.220px;color:#5a5a5a;">6</span>
<span class="t" style="left:786.56px;top:305.5px;line-height:32px;font-size:15px;font-family:'Liberation Mono','Noto Sans CJK SC',monospace;letter-spacing:-0.220px;"><span style="color:#7cc4f5">},</span></span>
<span class="t" style="right:620.5px;top:337.5px;line-height:32px;font-size:15px;font-family:'Liberation Mono','Noto Sans CJK SC',monospace;letter-spacing:-0.220px;color:#5a5a5a;">7</span>
<span class="t" style="left:786.56px;top:337.5px;line-height:32px;font-size:15px;font-family:'Liberation Mono','Noto Sans CJK SC',monospace;letter-spacing:-0.220px;"><span style="color:#f9a050">show_log</span><span style="color:#7cc4f5">()</span></span>
<span class="t" style="right:620.5px;top:369.5px;line-height:32px;font-size:15px;font-family:'Liberation Mono','Noto Sans CJK SC',monospace;letter-spacing:-0.220px;color:#5a5a5a;">8</span>
<span class="t" style="left:786.56px;top:369.5px;line-height:32px;font-size:15px;font-family:'Liberation Mono','Noto Sans CJK SC',monospace;letter-spacing:-0.220px;"><span style="color:#7cc4f5">{</span></span>
<span class="t" style="right:620.5px;top:401.5px;line-height:32px;font-size:15px;font-family:'Liberation Mono','Noto Sans CJK SC',monospace;letter-spacing:-0.220px;color:#c6c6c6;">9</span>
<span class="t" style="left:804.12px;top:401.5px;line-height:32px;font-size:15px;font-family:'Liberation Mono','Noto Sans CJK SC',monospace;letter-spacing:-0.220px;"><span style="color:#c8c8c8">console</span><span style="color:#7cc4f5">.</span><span style="color:#f9a050">log</span><span style="color:#d0d0d0">(</span><span style="color:#5eb0f0">this</span><span style="color:#7cc4f5">.</span><span style="color:#c8c8c8">data</span><span style="color:#7cc4f5">.</span><span style="color:#c8c8c8">Temp</span><span style="color:#d0d0d0">)</span></span>
<span class="t" style="right:620.5px;top:433.5px;line-height:32px;font-size:15px;font-family:'Liberation Mono','Noto Sans CJK SC',monospace;letter-spacing:-0.220px;color:#5a5a5a;">10</span>
<span class="t" style="left:786.56px;top:433.5px;line-height:32px;font-size:15px;font-family:'Liberation Mono','Noto Sans CJK SC',monospace;letter-spacing:-0.220px;"><span style="color:#7cc4f5">}</span></span>
<span class="t" style="right:620.5px;top:465.5px;line-height:32px;font-size:15px;font-family:'Liberation Mono','Noto Sans CJK SC',monospace;letter-spacing:-0.220px;color:#5a5a5a;">11</span>
<span class="t" style="left:769.00px;top:465.5px;line-height:32px;font-size:15px;font-family:'Liberation Mono','Noto Sans CJK SC',monospace;letter-spacing:-0.220px;"><span style="color:#7cc4f5">})</span></span>
<span class="t" style="right:620.5px;top:497.5px;line-height:32px;font-size:15px;font-family:'Liberation Mono','Noto Sans CJK SC',monospace;letter-spacing:-0.220px;color:#5a5a5a;">12</span>
<svg class="r" style="left:750px;top:148.2px;" width="12" height="8" viewBox="0 0 12 8"><path d="M1 1.500 L6 6.500 L11 1.500" stroke="#c5c5c5" fill="none" stroke-width="1.100"/></svg>
<svg class="r" style="left:750px;top:212.2px;" width="12" height="8" viewBox="0 0 12 8"><path d="M1 1.500 L6 6.500 L11 1.500" stroke="#c5c5c5" fill="none" stroke-width="1.100"/></svg>
<svg class="r" style="left:750px;top:340.2px;" width="12" height="8" viewBox="0 0 12 8"><path d="M1 1.500 L6 6.500 L11 1.500" stroke="#c5c5c5" fill="none" stroke-width="1.100"/></svg>
<div class="r" style="left:717px;top:714px;width:647px;height:1px;background:#404040;"></div>
<div class="r" style="left:717px;top:715px;width:647px;height:29px;background:#323232;"></div>
<span class="t" id="t57" style="left:737px;top:722.00px;line-height:16px;font-size:11px;color:#8a8a8a;">构建</span>
<div class="r" style="left:767px;top:721px;width:22px;height:18px;background:#4d4d4d;border-radius:9px;"></div>
<span class="t" id="t58" style="left:628px;width:300px;text-align:center;top:722.00px;line-height:16px;font-size:11px;color:#ffffff;">44</span>
<span class="t" id="t59" style="left:809px;top:722.00px;line-height:16px;font-size:11px;color:#ffffff;">调试器</span>
<div class="r" style="left:809px;top:743px;width:33px;height:1px;background:#ffffff;"></div>
<div class="r" style="left:849.5px;top:721px;width:18.5px;height:18px;background:#4d4d4d;border-radius:9px;"></div>
<span class="t" id="t60" style="left:708.7px;width:300px;text-align:center;top:722.00px;line-height:16px;font-size:11px;color:#ffffff;">2</span>
<span class="t" id="t61" style="left:887.5px;top:722.00px;line-height:16px;font-size:11px;color:#8a8a8a;">问题</span>
<span class="t" id="t62" style="left:929.5px;top:722.00px;line-height:16px;font-size:11px;color:#8a8a8a;">输出</span>
<span class="t" id="t63" style="left:971.5px;top:722.00px;line-height:16px;font-size:11px;color:#8a8a8a;">终端</span>
<span class="t" id="t64" style="left:1013.5px;top:722.00px;line-height:16px;font-size:11px;color:#8a8a8a;">代码质量</span>
<div class="r" style="left:717px;top:744px;width:647px;height:27px;background:#292a2d;"></div>
<div class="r" style="left:717px;top:770px;width:647px;height:1px;background:#3c3c3c;"></div>
<div class="r" style="left:812px;top:744px;width:66px;height:26px;background:#000000;"></div>
<svg class="r" style="left:725px;top:749px;" width="18" height="18" viewBox="0 0 18 18"><path d="M6 13.500 H3.500 a1 1 0 0 1 -1 -1 V4.500 a1 1 0 0 1 1 -1 h8 a1 1 0 0 1 1 1 V7" stroke="#9aa0a6" fill="none" stroke-width="1.200"/><path d="M8 8 L15 10.500 L12 11.800 L14.500 15 L13.300 16 L10.800 12.800 L9 15.200Z" fill="#9aa0a6"/></svg>
<div class="r" style="left:751px;top:749px;width:1px;height:16px;background:#4a4c50;"></div>
<span class="t" id="t65" style="left:769.8px;top:749.50px;line-height:16px;font-size:12px;color:#d8d8d8;">Wxml</span>
<span class="t" id="t66" style="left:824px;top:749.50px;line-height:16px;font-size:12px;color:#ffffff;letter-spacing:-0.290px;">Console</span>
<span class="t" id="t67" style="left:889.5px;top:749.50px;line-height:16px;font-size:12px;color:#d8d8d8;letter-spacing:-0.290px;">Sources</span>
<span class="t" id="t68" style="left:954.8px;top:749.50px;line-height:16px;font-size:12px;color:#d8d8d8;letter-spacing:0.212px;">Network</span>
<span class="t" id="t69" style="left:1023.8px;top:749.50px;line-height:16px;font-size:12px;color:#d8d8d8;letter-spacing:-0.218px;">Performance</span>
<span class="t" id="t70" style="left:1113.8px;top:749.50px;line-height:16px;font-size:12px;color:#d8d8d8;letter-spacing:0.193px;">Memory</span>
<span class="t" id="t71" style="left:1181.4px;top:749.50px;line-height:16px;font-size:12px;color:#d8d8d8;letter-spacing:0.014px;">AppData</span>
<span class="t" id="t72" style="left:1251.5px;top:749.50px;line-height:16px;font-size:12px;color:#d8d8d8;letter-spacing:-0.147px;">Storage</span>
<span class="t" id="t73" style="left:1315.6px;top:749.50px;line-height:16px;font-size:12px;color:#d8d8d8;letter-spacing:-0.107px;">Security</span>
<div class="r" style="left:717px;top:771px;width:647px;height:26px;background:#292a2d;"></div>
<div class="r" style="left:717px;top:797px;width:647px;height:1px;background:#3c3c3c;"></div>
<svg class="r" style="left:724px;top:776px;" width="16" height="16" viewBox="0 0 16 16"><rect x="1.500" y="2.500" width="13" height="11" stroke="#9aa0a6" fill="none" stroke-width="1.200"/><path d="M5.500 2.500v11" stroke="#9aa0a6" fill="none" stroke-width="1.200"/><path d="M8 5.500 L11.500 8 L8 10.500Z" fill="#9aa0a6"/></svg>
<svg class="r" style="left:754px;top:776px;" width="16" height="16" viewBox="0 0 16 16"><circle cx="7.600" cy="8.200" r="5.600" stroke="#9aa0a6" fill="none" stroke-width="1.800"/><path d="M3.700 4.300 L11.500 12.100" stroke="#9aa0a6" stroke-width="1.800"/></svg>
<div class="r" style="left:779px;top:776px;width:1px;height:16px;background:#4a4c50;"></div>
<span class="t" id="t74" style="left:789px;top:776.50px;line-height:16px;font-size:12px;color:#d8d8d8;letter-spacing:0.438px;">top</span>
<div class="r" style="left:909.300px;top:780.500px;border:3.700px solid transparent;border-top:7px solid #9aa0a6;border-bottom:0;"></div>
<div class="r" style="left:926px;top:776px;width:1px;height:16px;background:#4a4c50;"></div>
<svg class="r" style="left:936px;top:777px;" width="18" height="14" viewBox="0 0 18 14"><path d="M1 7 C4 2 14 2 17 7 C14 12 4 12 1 7Z" fill="#9aa0a6"/><circle cx="9" cy="7" r="3.300" fill="#292a2d"/><circle cx="9" cy="7" r="1.800" fill="#9aa0a6"/></svg>
<div class="r" style="left:963.5px;top:776px;width:1px;height:16px;background:#4a4c50;"></div>
<div class="r" style="left:970px;top:774px;width:261px;height:19px;border:1px solid #5a5a5a;background:#242424;"></div>
<span class="t" id="t75" style="left:975.5px;top:777.50px;line-height:16px;font-size:12px;color:#d0d0d0;letter-spacing:-0.029px;">Filter</span>
<span class="t" id="t76" style="left:1241px;top:776.50px;line-height:16px;font-size:12px;color:#d8d8d8;letter-spacing:-0.146px;">Default levels</span>
<div class="r" style="left:1315.500px;top:781px;border:3.500px solid transparent;border-top:6px solid #8a8a8a;border-bottom:0;"></div>
<div class="r" style="left:717px;top:798px;width:647px;height:206px;background:#242424;"></div>
<div class="r" style="left:717px;top:798px;width:647px;height:9px;overflow:hidden;"><span class="t" style="left:24.500px;top:-10px;line-height:20px;font-size:11px;font-weight:bold;font-family:'Liberation Mono','Noto Sans CJK SC',monospace;color:#ffffff;letter-spacing:-0.060px;">this.data.Temp</span></div>
<div class="r" style="left:717px;top:807px;width:647px;height:1px;background:#3a3a3a;"></div>
<div class="r" style="left:717px;top:827px;width:647px;height:1px;background:#3a3a3a;"></div>
<div class="r" style="left:717px;top:847px;width:647px;height:1px;background:#3a3a3a;"></div>
<div class="r" style="left:717px;top:867px;width:647px;height:1px;background:#3a3a3a;"></div>
<div class="r" style="left:717px;top:887px;width:647px;height:1px;background:#3a3a3a;"></div>
<div class="r" style="left:717px;top:907px;width:647px;height:1px;background:#3a3a3a;"></div>
<div class="r" style="left:717px;top:927px;width:647px;height:1px;background:#3a3a3a;"></div>
<div class="r" style="left:717px;top:947px;width:647px;height:1px;background:#3a3a3a;"></div>
<div class="r" style="left:717px;top:966px;width:647px;height:1px;background:#3a3a3a;"></div>
<span class="t" id="t77" style="left:741.5px;top:810.50px;line-height:16px;font-size:11px;color:#9980ff;font-family:'Liberation Mono','Noto Sans CJK SC',monospace;letter-spacing:-0.302px;">20</span>
<span class="t" id="t78" style="left:741.5px;top:830.50px;line-height:16px;font-size:11px;color:#9980ff;font-family:'Liberation Mono','Noto Sans CJK SC',monospace;letter-spacing:-0.302px;">20</span>
<span class="t" id="t79" style="left:741.5px;top:850.50px;line-height:16px;font-size:11px;color:#9980ff;font-family:'Liberation Mono','Noto Sans CJK SC',monospace;letter-spacing:-0.302px;">20</span>
<span class="t" id="t80" style="left:741.5px;top:870.50px;line-height:16px;font-size:11px;color:#9980ff;font-family:'Liberation Mono','Noto Sans CJK SC',monospace;letter-spacing:-0.302px;">20</span>
<span class="t" id="t81" style="left:741.5px;top:890.50px;line-height:16px;font-size:11px;color:#9980ff;font-family:'Liberation Mono','Noto Sans CJK SC',monospace;letter-spacing:-0.302px;">20</span>
<span class="t" id="t82" style="left:741.5px;top:910.50px;line-height:16px;font-size:11px;color:#9980ff;font-family:'Liberation Mono','Noto Sans CJK SC',monospace;letter-spacing:-0.302px;">20</span>
<span class="t" id="t83" style="left:741.5px;top:930.50px;line-height:16px;font-size:11px;color:#9980ff;font-family:'Liberation Mono','Noto Sans CJK SC',monospace;letter-spacing:-0.302px;">20</span>
<span class="t" id="t84" style="left:741.5px;top:950.50px;line-height:16px;font-size:11px;color:#9980ff;font-family:'Liberation Mono','Noto Sans CJK SC',monospace;letter-spacing:-0.302px;">20</span>
<svg class="r" style="left:725px;top:972px;" width="10" height="10" viewBox="0 0 10 10"><path d="M2.500 1.500 L6.500 5 L2.500 8.500" stroke="#367cf1" fill="none" stroke-width="1.500"/></svg>
<svg class="r" style="left:796px;top:370px;" width="276" height="105" viewBox="0 0 276 105"><rect x="5.700" y="5.800" width="264.500" height="93.200" rx="4" fill="none" stroke="#f05468" stroke-width="3.500"/></svg>
<svg class="r" style="left:702px;top:830px;" width="160" height="84" viewBox="0 0 160 84"><rect x="6" y="5.600" width="148.300" height="71.700" rx="4" fill="none" stroke="#f05468" stroke-width="3.500"/></svg>
</body></html>
